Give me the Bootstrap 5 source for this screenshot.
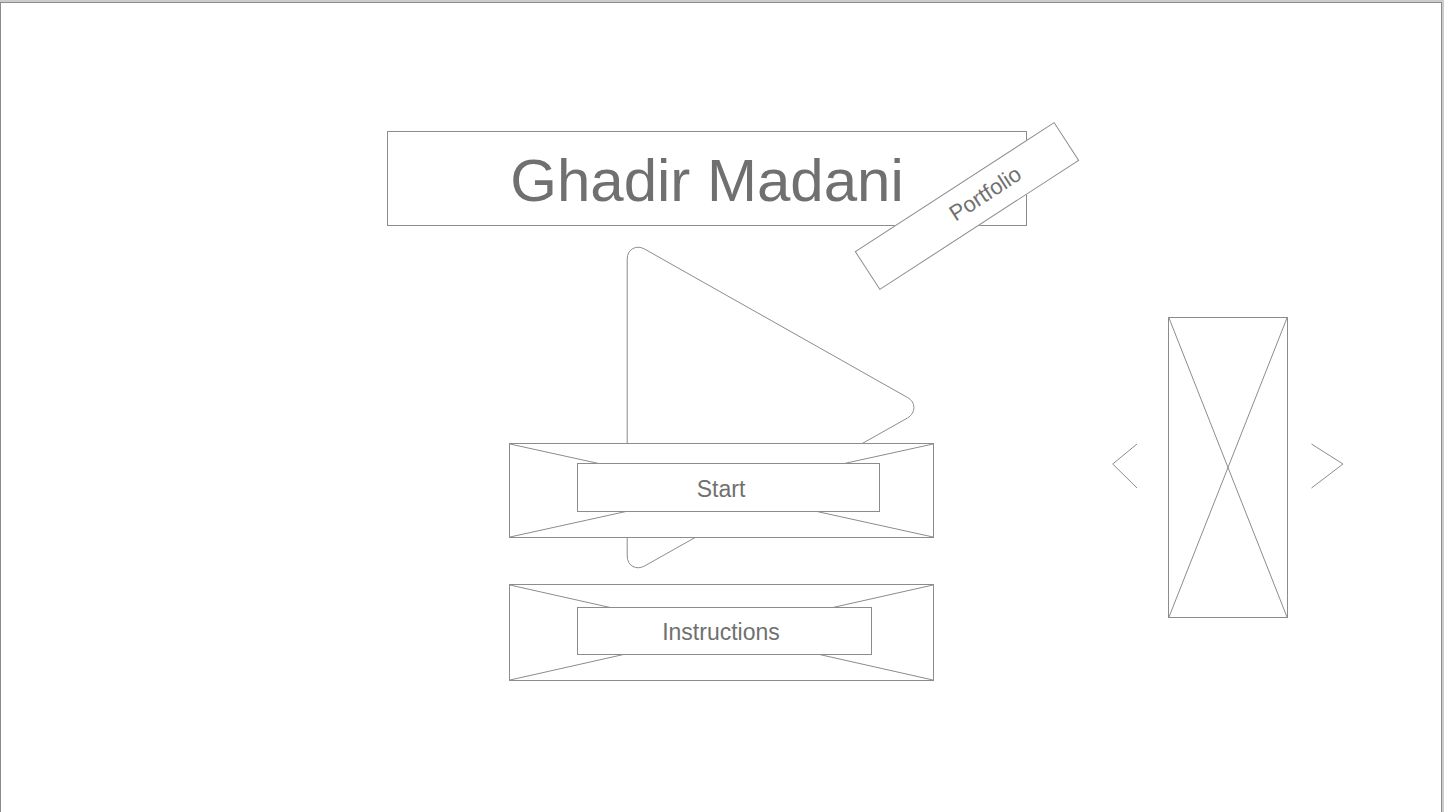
<!DOCTYPE html>
<html lang="en">
<head>
<meta charset="utf-8">
<meta name="viewport" content="width=device-width, initial-scale=1">
<title>Ghadir Madani – Portfolio</title>
<link href="https://cdn.jsdelivr.net/npm/bootstrap@5.3.0/dist/css/bootstrap.min.css" rel="stylesheet">
<style>
  :root { --line: #8c8c8c; --ink: #707070; }
  body { font-family: "Liberation Sans", Arial, sans-serif; color: var(--ink); background: #ccc; padding: 2px 2px 0 0; }
  .frame { border: 1px solid var(--line); border-bottom: 0; }
  .stage { display: grid; grid-template-columns: minmax(0, 1fr) 668px minmax(0, 1fr); }
  .center-col { grid-column: 2; padding-top: 128px; }
  .outlined { background: #fff; border: 1px solid var(--line); }
  .title-box { width: 640px; height: 95px; padding-top: 4px; }
  .title-box h1 { font-size: 60px; line-height: 72px; }
  .ribbon { right: -60px; top: 51px; width: 238px; height: 46px; padding-left: 44px; font-size: 22px; line-height: 28px; transform: rotate(-33deg); }
  .menu-stack { display: grid; margin-top: 20px; }
  .menu-stack > * { grid-area: 1 / 1; }
  .play-shape { margin-left: 239px; }
  .menu-list { padding-top: 197px; gap: 46px; }
  .menu-btn { width: 425px; height: 95px; padding: 19px 53px 25px 67px; color: var(--ink); font-size: 23px; line-height: 28px; }
  .menu-btn.short-label { height: 97px; padding: 22px 61px 25px 67px; }
  .menu-btn .label-box { padding: 2px 14px 0 0; }
  .menu-btn.short-label .label-box { padding-right: 6px; }
  .side-col { padding: 314px 97px 0 0; }
  .preview { width: 120px; height: 301px; margin: 0 23px 0 30px; }
  .arrow-btn { margin-bottom: 4px; }
  svg { display: block; fill: none; stroke: var(--line); }
  .cross line { vector-effect: non-scaling-stroke; }
</style>
</head>
<body>
<main class="frame bg-white min-vh-100">
  <div class="stage">
    <div class="center-col">
      <header class="title-box outlined position-relative d-flex align-items-center justify-content-center">
        <h1 class="m-0 fw-normal text-nowrap">Ghadir Madani</h1>
        <div class="ribbon outlined position-absolute d-flex align-items-center justify-content-center">Portfolio</div>
      </header>
      <div class="menu-stack">
        <svg class="play-shape" width="290" height="324" viewBox="0 0 290 324" aria-hidden="true">
          <path d="M1.200 13 C1.200 3 10.500 -1.500 18.500 3 L281.500 151.500 C290 156 290 167 281.500 172 L18.500 320 C10.500 324.500 1.200 320 1.200 310 Z"/>
        </svg>
        <nav class="menu-list d-flex flex-column align-items-center" aria-label="Main menu">
          <button type="button" class="menu-btn outlined position-relative">
            <svg class="cross position-absolute top-0 start-0 w-100 h-100" viewBox="0 0 100 100" preserveAspectRatio="none" aria-hidden="true"><line x1="0" y1="0" x2="100" y2="100"/><line x1="0" y1="100" x2="100" y2="0"/></svg>
            <span class="label-box outlined position-relative d-flex align-items-center justify-content-center w-100 h-100">Start</span>
          </button>
          <button type="button" class="menu-btn short-label outlined position-relative">
            <svg class="cross position-absolute top-0 start-0 w-100 h-100" viewBox="0 0 100 100" preserveAspectRatio="none" aria-hidden="true"><line x1="0" y1="0" x2="100" y2="100"/><line x1="0" y1="100" x2="100" y2="0"/></svg>
            <span class="label-box outlined position-relative d-flex align-items-center justify-content-center w-100 h-100">Instructions</span>
          </button>
        </nav>
      </div>
    </div>
    <aside class="side-col d-flex align-items-start justify-content-end">
      <div class="d-flex align-items-center">
        <button type="button" class="arrow-btn border-0 bg-transparent p-0" aria-label="Previous">
          <svg width="26" height="46" viewBox="0 0 26 46"><path d="M25 1 L.7 21 L25 45"/></svg>
        </button>
        <div class="preview outlined">
          <svg class="cross w-100 h-100" viewBox="0 0 100 100" preserveAspectRatio="none" aria-hidden="true"><line x1="0" y1="0" x2="100" y2="100"/><line x1="0" y1="100" x2="100" y2="0"/></svg>
        </div>
        <button type="button" class="arrow-btn border-0 bg-transparent p-0" aria-label="Next">
          <svg width="33" height="46" viewBox="0 0 33 46"><path d="M.5 1 L32 21 L.5 45"/></svg>
        </button>
      </div>
    </aside>
  </div>
</main>
<script src="https://cdn.jsdelivr.net/npm/bootstrap@5.3.0/dist/js/bootstrap.bundle.min.js"></script>
</body>
</html>
